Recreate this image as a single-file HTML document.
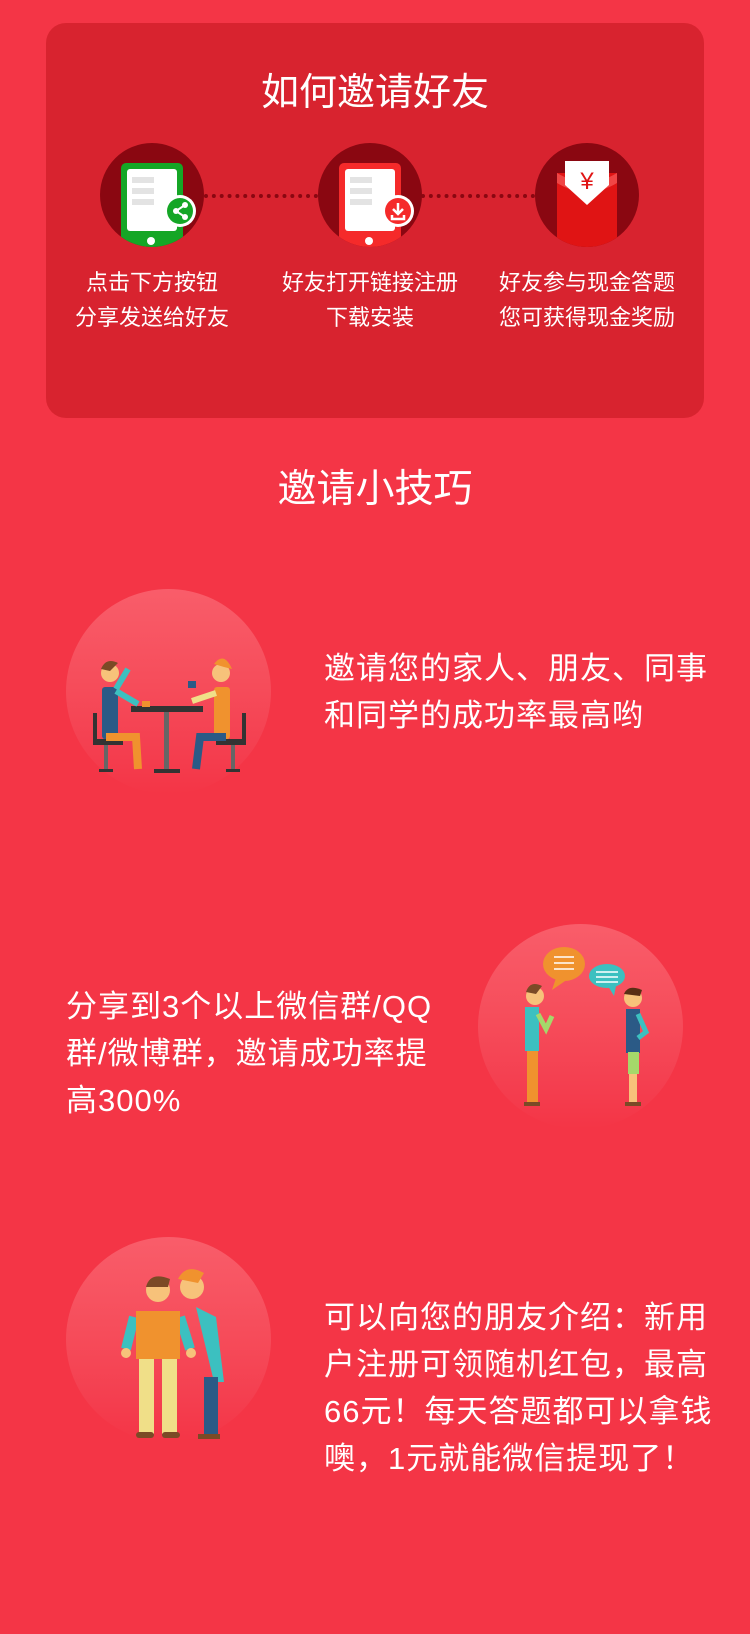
<!DOCTYPE html>
<html><head><meta charset="utf-8"><style>
*{margin:0;padding:0;box-sizing:border-box}
body{width:750px;height:1634px;background:#f43546;position:relative;overflow:hidden;font-family:"Liberation Sans","Noto Sans CJK SC",sans-serif;color:#fff}
.card{position:absolute;left:46px;top:23px;width:658px;height:395px;background:#d8232f;border-radius:20px}
.t1{position:absolute;left:0;width:750px;top:67px;text-align:center;font-size:38px;line-height:52px}
.ic{position:absolute;top:143px;width:104px;height:104px;border-radius:50%;background:#8a0711;overflow:hidden}
.dots{position:absolute;top:194px;height:4px;border-top:4px dotted #8a0711}
.st{position:absolute;top:265px;width:230px;text-align:center;font-size:22px;line-height:35px}
.t2{position:absolute;left:0;width:750px;top:464px;text-align:center;font-size:39px;line-height:52px}
.circ{position:absolute;width:205px;height:205px;border-radius:50%;background:linear-gradient(180deg,#f95d6a 0%,#f64d5b 45%,#f43e4f 80%,#f43546 100%)}
.tx{position:absolute;font-size:31px;letter-spacing:1px;line-height:47px;white-space:nowrap}
</style></head><body>
<div class="card"></div>
<div class="t1">如何邀请好友</div>
<div class="dots" style="left:204px;width:114px"></div>
<div class="dots" style="left:421px;width:114px"></div>
<div class="ic" style="left:100px">
<svg width="104" height="104"><rect x="21" y="20" width="62" height="92" rx="5" fill="#15a626"/><rect x="27" y="26" width="50" height="62" rx="3" fill="#fff"/><rect x="32" y="34" width="22" height="6" fill="#e3e3e3"/><rect x="32" y="45" width="22" height="6" fill="#e3e3e3"/><rect x="32" y="56" width="22" height="6" fill="#e3e3e3"/><circle cx="51" cy="98" r="4" fill="#fff"/><circle cx="80" cy="68" r="16" fill="#fff"/><circle cx="80" cy="68" r="13" fill="#15a626"/><circle cx="85" cy="62" r="3" fill="#fff"/><circle cx="76" cy="68" r="3" fill="#fff"/><circle cx="85" cy="74" r="3" fill="#fff"/><path d="M85 62L76 68L85 74" stroke="#fff" stroke-width="2" fill="none"/></svg></div>
<div class="ic" style="left:318px">
<svg width="104" height="104"><rect x="21" y="20" width="62" height="92" rx="5" fill="#f52a2a"/><rect x="27" y="26" width="50" height="62" rx="3" fill="#fff"/><rect x="32" y="34" width="22" height="6" fill="#e3e3e3"/><rect x="32" y="45" width="22" height="6" fill="#e3e3e3"/><rect x="32" y="56" width="22" height="6" fill="#e3e3e3"/><circle cx="51" cy="98" r="4" fill="#fff"/><circle cx="80" cy="68" r="16" fill="#fff"/><circle cx="80" cy="68" r="13" fill="#f52a2a"/><path d="M80 60V71M75 66L80 71L85 66M74 72V76H86V72" stroke="#fff" stroke-width="2.5" fill="none"/></svg></div>
<div class="ic" style="left:535px">
<svg width="104" height="104"><rect x="22" y="30" width="60" height="80" fill="#e01414"/><path d="M22 30Q52 48 82 30V40Q52 58 22 40Z" fill="#f04545"/><path d="M30 18H74V42L52 62L30 42Z" fill="#fff"/><text x="52" y="46" font-size="24" fill="#e01414" text-anchor="middle" font-family="Liberation Sans">¥</text></svg></div>
<div class="st" style="left:37px">点击下方按钮<br>分享发送给好友</div>
<div class="st" style="left:255px">好友打开链接注册<br>下载安装</div>
<div class="st" style="left:472px">好友参与现金答题<br>您可获得现金奖励</div>
<div class="t2">邀请小技巧</div>

<div class="circ" style="left:66px;top:589px"></div>
<svg style="position:absolute;left:66px;top:589px" width="205" height="205">
<rect x="65" y="117" width="72" height="6" fill="#333"/><rect x="98" y="123" width="5" height="58" fill="#666"/><rect x="88" y="180" width="26" height="4" fill="#333"/>
<rect x="27" y="124" width="4" height="30" fill="#333"/><rect x="27" y="150" width="30" height="6" fill="#333"/><rect x="38" y="156" width="4" height="25" fill="#666"/><rect x="33" y="180" width="14" height="3" fill="#333"/>
<rect x="176" y="124" width="4" height="30" fill="#333"/><rect x="150" y="150" width="30" height="6" fill="#333"/><rect x="165" y="156" width="4" height="25" fill="#666"/><rect x="160" y="180" width="14" height="3" fill="#333"/>
<rect x="36" y="98" width="16" height="52" rx="3" fill="#2b5a86"/><path d="M50 102L72 115" stroke="#3cc0c0" stroke-width="6"/><path d="M50 100L62 80" stroke="#3cc0c0" stroke-width="6"/><circle cx="44" cy="84" r="9" fill="#f7c27a"/><path d="M35 80Q40 68 52 74L44 82Z" fill="#7b4a26"/><path d="M40 148H70L72 180" stroke="#f0922e" stroke-width="8" fill="none"/>
<rect x="148" y="98" width="16" height="52" rx="3" fill="#f0922e"/><path d="M150 104L126 112" stroke="#f0df88" stroke-width="6"/><circle cx="155" cy="84" r="9" fill="#f7c27a"/><path d="M148 75Q158 62 166 80L158 78Z" fill="#f0922e"/><path d="M160 148H134L130 180" stroke="#2b5a86" stroke-width="8" fill="none"/><rect x="122" y="92" width="8" height="7" fill="#2b5a86"/><rect x="76" y="112" width="8" height="6" fill="#f0922e"/>
</svg>
<div class="tx" style="left:324px;top:645px">邀请您的家人、朋友、同事<br>和同学的成功率最高哟</div>

<div class="circ" style="left:478px;top:924px"></div>
<svg style="position:absolute;left:478px;top:924px" width="205" height="205">
<ellipse cx="86" cy="40" rx="21" ry="17" fill="#f0922e"/><path d="M78 54L74 66L90 55Z" fill="#f0922e"/><path d="M76 33H96M76 39H96M76 45H96" stroke="#fff" stroke-width="1.5"/>
<ellipse cx="129" cy="52" rx="18" ry="12" fill="#3cc0c0"/><path d="M130 62L136 72L138 62Z" fill="#3cc0c0"/><path d="M118 48H140M118 53H140M118 58H140" stroke="#fff" stroke-width="1.5"/>
<circle cx="57" cy="72" r="9" fill="#f7c27a"/><path d="M48 68Q52 56 64 62L58 70Z" fill="#7b4a26"/><rect x="47" y="83" width="14" height="44" fill="#3cc0c0"/><path d="M60 90L68 105L74 92" stroke="#a5d86a" stroke-width="5" fill="none"/><rect x="49" y="127" width="11" height="52" fill="#f0922e"/><rect x="46" y="178" width="16" height="4" fill="#7b4a26"/>
<circle cx="155" cy="74" r="9" fill="#f7c27a"/><path d="M146 70Q150 60 164 66L162 72Z" fill="#5a2e14"/><rect x="148" y="85" width="14" height="44" fill="#2b5a86"/><path d="M160 90L168 108L160 114" stroke="#3cc0c0" stroke-width="5" fill="none"/><rect x="150" y="128" width="11" height="22" fill="#a5d86a"/><rect x="151" y="150" width="8" height="28" fill="#f7c27a"/><rect x="147" y="178" width="16" height="4" fill="#7b4a26"/>
</svg>
<div class="tx" style="left:66px;top:983px">分享到3个以上微信群/QQ<br>群/微博群，邀请成功率提<br>高300%</div>

<div class="circ" style="left:66px;top:1237px"></div>
<svg style="position:absolute;left:66px;top:1237px" width="205" height="205">
<path d="M130 70L150 80L158 145L148 145Z" fill="#3cc0c0"/><rect x="138" y="140" width="14" height="60" fill="#2b5a86"/><rect x="132" y="197" width="22" height="5" fill="#7b4a26"/><circle cx="126" cy="50" r="12" fill="#f7c27a"/><path d="M112 42Q120 26 138 36L132 46Z" fill="#f0922e"/>
<circle cx="92" cy="53" r="12" fill="#f7c27a"/><path d="M80 50Q84 34 104 42L102 50Z" fill="#7b4a26"/>
<path d="M68 80L60 112" stroke="#3cc0c0" stroke-width="10"/><path d="M114 80L124 112" stroke="#3cc0c0" stroke-width="10"/><circle cx="60" cy="116" r="5" fill="#f7c27a"/><circle cx="125" cy="116" r="5" fill="#f7c27a"/>
<rect x="70" y="74" width="44" height="48" fill="#f0922e"/><rect x="73" y="122" width="15" height="75" fill="#f0df88"/><rect x="96" y="122" width="15" height="75" fill="#f0df88"/><rect x="70" y="195" width="18" height="6" rx="3" fill="#7b4a26"/><rect x="96" y="195" width="18" height="6" rx="3" fill="#7b4a26"/>
</svg>
<div class="tx" style="left:324px;top:1294px">可以向您的朋友介绍：新用<br>户注册可领随机红包，最高<br>66元！每天答题都可以拿钱<br>噢，1元就能微信提现了！</div>
</body></html>
